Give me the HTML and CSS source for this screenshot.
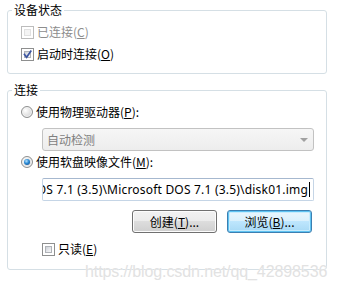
FILE: index.html
```html
<!DOCTYPE html>
<html lang="zh-CN">
<head>
<meta charset="utf-8">
<title>软盘设置</title>
<link rel="stylesheet" href="styles.css">
</head>
<body>
<div class="page">
  <div class="group g1">
    <div class="legend">设备状态</div>
    <div class="row first">
      <span class="cb disabled"></span>
      <span class="lbl dis">已连接(<u>C</u>)</span>
    </div>
    <div class="row">
      <span class="cb"><svg class="tick" viewBox="0 0 9 9" width="9" height="9"><path d="M1.5 4.5 L3.6 7.2 L7.8 1.2" fill="none" stroke="#3b54a0" stroke-width="1.7" stroke-linecap="square"/></svg></span>
      <span class="lbl">启动时连接(<u>O</u>)</span>
    </div>
  </div>

  <div class="group g2">
    <div class="legend">连接</div>
    <div class="row first">
      <span class="rb"></span>
      <span class="lbl">使用物理驱动器(<u>P</u>):</span>
    </div>
    <div class="combo">
      <span class="combo-text">自动检测</span>
      <span class="arrow"></span>
    </div>
    <div class="row">
      <span class="rb on"><span class="dot"></span></span>
      <span class="lbl">使用软盘映像文件(<u>M</u>):</span>
    </div>
    <div class="textbox">
      <span class="val">C:\Users\Public\Documents\Microsoft DOS 7.1 (3.5)\Microsoft DOS 7.1 (3.5)\disk01.img</span><span class="caret"></span>
    </div>
    <div class="btns">
      <button class="btn">创建(<u>T</u>)...</button>
      <button class="btn default">浏览(<u>B</u>)...</button>
    </div>
    <div class="row ro">
      <span class="cb"></span>
      <span class="lbl">只读(<u>E</u>)</span>
    </div>
  </div>

  <div class="watermark">https://blog.csdn.net/qq_42898536</div>
</div>
</body>
</html>
```

FILE: styles.css
```css
html, body {
  margin: 0;
  padding: 0;
  background: #fff;
}

.page {
  position: relative;
  width: 337px;
  height: 292px;
  overflow: hidden;
  padding-left: 7px;
  box-sizing: border-box;
  font-family: "Noto Sans CJK SC", "Noto Sans", sans-serif;
  font-size: 12px;
  color: #000;
}

.group {
  width: 320px;
  box-sizing: border-box;
  border: 1px solid #d5dfe5;
  border-radius: 3px;
  padding: 0 0 0 13px;
}

.g1 {
  margin-top: 10px;
  padding-bottom: 8px;
}

.g2 {
  margin-top: 16px;
  padding-bottom: 9px;
}

.legend {
  width: fit-content;
  margin: -8px 0 0 -9px;
  padding: 0 2px;
  background: #fff;
  line-height: 14px;
  height: 14px;
}

.row {
  display: flex;
  align-items: center;
  height: 22px;
}

.row.first {
  margin-top: 4px;
}

.lbl {
  margin-left: 3px;
  line-height: 14px;
  white-space: nowrap;
}

.lbl.dis {
  color: #8d8d8d;
}

u {
  text-decoration: underline;
  text-underline-offset: 1px;
}

/* checkbox */
.cb {
  width: 13px;
  height: 13px;
  box-sizing: border-box;
  border: 1px solid #8e8f8f;
  background: #fff;
  padding: 1px;
  display: flex;
  align-items: center;
  justify-content: center;
  position: relative;
  flex-shrink: 0;
}

.cb::before {
  content: "";
  position: absolute;
  left: 2px;
  top: 2px;
  right: 2px;
  bottom: 2px;
  background: linear-gradient(135deg, #cbcfd5 0%, #e4e6ea 50%, #f7f7f7 100%);
  border: 1px solid #b0b3b8;
  box-sizing: border-box;
}

.cb.disabled {
  border-color: #bcbcbc;
}

.cb.disabled::before {
  background: #f4f4f4;
  border-color: #e1e1e1;
}

.tick {
  position: relative;
  display: block;
}

/* radio */
.rb {
  width: 12px;
  height: 12px;
  box-sizing: border-box;
  border-radius: 50%;
  border: 1px solid #8e8f8f;
  background: radial-gradient(circle at 35% 35%, #ffffff 0%, #e6e6e6 45%, #c9cbcf 100%);
  box-shadow: inset 0 0 0 1px #f4f4f4;
  display: flex;
  align-items: center;
  justify-content: center;
  flex-shrink: 0;
}

.rb .dot {
  width: 6px;
  height: 6px;
  border-radius: 50%;
  background: radial-gradient(circle at 40% 35%, #b8e3ff 0%, #2a8ad4 45%, #0c3f7e 100%);
}

/* combo */
.combo {
  margin: 5px 0 0 21px;
  width: 272px;
  height: 23px;
  box-sizing: border-box;
  border: 1px solid #c2c2c2;
  border-radius: 3px;
  background: linear-gradient(#f6f6f6, #ededed);
  display: flex;
  align-items: center;
  justify-content: space-between;
  padding: 0 5px 0 4px;
}

.combo-text {
  color: #7f7f7f;
  line-height: 14px;
}

.arrow {
  width: 0;
  height: 0;
  border-left: 4px solid transparent;
  border-right: 4px solid transparent;
  border-top: 4px solid #a0a0a0;
  margin-top: 1px;
}

/* textbox */
.textbox {
  margin: 5px 0 0 21px;
  width: 272px;
  height: 23px;
  box-sizing: border-box;
  border: 1px solid #c5d5e6;
  border-top-color: #a6b8cf;
  border-radius: 2px;
  display: flex;
  align-items: center;
  justify-content: flex-end;
  overflow: hidden;
  padding-right: 3px;
  font-family: "Noto Sans", "Open Sans", sans-serif;
  font-size: 12px;
  white-space: nowrap;
}

.val {
  flex-shrink: 0;
  line-height: 14px;
  letter-spacing: 0.2px;
}

.caret {
  flex-shrink: 0;
  width: 1px;
  height: 15px;
  background: #000;
  margin-left: 1px;
}

/* buttons */
.btns {
  display: flex;
  justify-content: flex-end;
  gap: 10px;
  margin: 9px 0 0 0;
  width: 291px;
}

.btn {
  width: 85px;
  height: 23px;
  box-sizing: border-box;
  border: 1px solid #707070;
  border-radius: 3px;
  background: linear-gradient(#f2f2f2 0%, #ebebeb 50%, #dddddd 50%, #cfcfcf 100%);
  box-shadow: inset 0 0 0 1px #fcfcfc;
  font-family: "Noto Sans CJK SC", "Noto Sans", sans-serif;
  font-size: 12px;
  color: #000;
  padding: 0;
  line-height: 14px;
}

.btn.default {
  border-color: #3c7fb1;
  background: linear-gradient(#eaf6fd 0%, #d9f0fc 50%, #bee6fd 50%, #a7d9f5 100%);
  box-shadow: inset 0 0 0 1px #5fc3f2, inset 0 0 0 2px #c8ecfd;
}

.row.ro {
  margin-top: 5px;
  padding-left: 21px;
}

/* watermark */
.watermark {
  position: absolute;
  left: 85px;
  top: 263px;
  font-family: "Liberation Sans", Arial, sans-serif;
  font-size: 16px;
  color: #e2e2e2;
  text-shadow: 0 0 1px #fff;
  white-space: nowrap;
  letter-spacing: -0.1px;
}
```
